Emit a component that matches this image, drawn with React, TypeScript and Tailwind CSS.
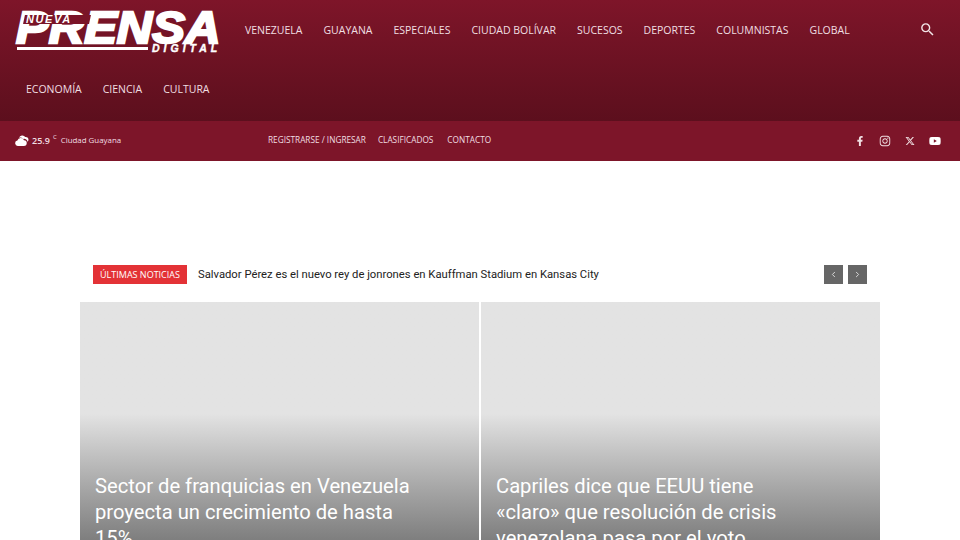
import { ChevronLeft, ChevronRight } from "lucide-react";
import { FaFacebookF, FaInstagram, FaYoutube } from "react-icons/fa";
import { FaXTwitter } from "react-icons/fa6";

const nav = ["VENEZUELA", "GUAYANA", "ESPECIALES", "CIUDAD BOLÍVAR", "SUCESOS", "DEPORTES", "COLUMNISTAS", "GLOBAL"];
const nav2 = ["ECONOMÍA", "CIENCIA", "CULTURA"];

function Logo() {
  return (
    <div className="relative w-[220px] h-[54px] text-white font-['Liberation_Sans',sans-serif] italic font-bold">
      <span className="absolute left-[16px] top-[-3px] text-[45px] leading-[50px] [-webkit-text-stroke:2.4px_white] origin-left scale-x-[1.09] whitespace-nowrap">PRENSA</span>
      <span className="absolute left-[24px] top-[9px] w-[66px] h-[9px] bg-[#7a1428] skew-x-[-12deg]" />
      <span className="absolute left-[26px] top-[8px] text-[11px] leading-[11px] tracking-[1.6px] text-white whitespace-nowrap">NUEVA</span>
      <div className="absolute left-[17px] top-[41px] w-[131px] h-[3px] bg-white" />
      <span className="absolute left-[152px] top-[36px] text-[10.5px] leading-[12px] tracking-[4px] [-webkit-text-stroke:0.4px_white] whitespace-nowrap">DIGITAL</span>
    </div>
  );
}

function Card({ lines }: { lines: string[] }) {
  return (
    <div className="h-[238px] overflow-hidden bg-gradient-to-b from-[#e3e3e3] from-[47%] to-[#5f5f5f] to-[118%] pl-[15px] pt-[171px]">
      {lines.map((l) => (
        <div key={l} className="text-[20.2px] leading-[26px] text-white whitespace-nowrap">
          {l}
        </div>
      ))}
    </div>
  );
}

export default function App() {
  return (
    <div className="w-[960px] h-[540px] overflow-hidden bg-white font-['Roboto',sans-serif]">
      {/* Header */}
      <div className="h-[121px] bg-gradient-to-b from-[#7e1529] to-[#5c0f1d] flex font-['Open_Sans',sans-serif]">
        <div className="w-[235px] shrink-0 pt-[6px]">
          <Logo />
        </div>
        <div className="flex-1 pl-[10px] text-[10.5px] text-[#f0dfe2]">
          <div className="flex items-center h-[61px] gap-[21px] whitespace-nowrap">
            {nav.map((n) => (
              <span key={n}>{n}</span>
            ))}
          </div>
        </div>
        <div className="w-[41px] pt-[21px] shrink-0">
          <svg width="17" height="17" viewBox="0 0 24 24" fill="#f3e6e8">
            <path d="M15.5 14h-.79l-.28-.27A6.47 6.47 0 0 0 16 9.5 6.5 6.5 0 1 0 9.5 16c1.61 0 3.09-.59 4.23-1.57l.27.28v.79l5 4.99L20.49 19l-4.99-5zm-6 0C7.01 14 5 11.99 5 9.5S7.01 5 9.5 5 14 7.01 14 9.5 11.99 14 9.5 14z" />
          </svg>
        </div>
      </div>
      <div className="h-0">
        <div className="relative -top-[61px] h-[60px] flex items-center pl-[26px] gap-[21px] text-[10.5px] text-[#f0dfe2] font-['Open_Sans',sans-serif]">
          {nav2.map((n) => (
            <span key={n}>{n}</span>
          ))}
        </div>
      </div>

      {/* Top bar */}
      <div className="h-[40px] pb-[1px] bg-[#7d1529] flex items-center text-[#f0dfe2] font-['Open_Sans',sans-serif]">
        <div className="w-[268px] pl-[15px] flex items-center shrink-0 whitespace-nowrap">
          <svg width="14" height="11" viewBox="0 0 28 22" fill="white">
            <path d="M8 5.5A7 7 0 0 1 20.5 4 5.5 5.5 0 0 1 27 9.5a4.5 4.5 0 0 1-2 3.8A6.5 6.5 0 0 0 16 8a8 8 0 0 0-8-2.5z" />
            <path d="M6 22a5.5 5.5 0 0 1-1.2-10.9A7 7 0 0 1 18 10.5a5.7 5.7 0 0 1 5.5 5.7A5.8 5.8 0 0 1 17.7 22H6z" />
          </svg>
          <span className="ml-[3px] text-[9px] font-semibold">25.9</span>
          <span className="ml-[3px] mb-[7px] text-[6px]">C</span>
          <span className="ml-[4px] text-[7.9px]">Ciudad Guayana</span>
        </div>
        <div className="flex text-[8.25px] whitespace-nowrap">
          <span>REGISTRARSE / INGRESAR</span>
          <span className="ml-[12px]">CLASIFICADOS</span>
          <span className="ml-[14px]">CONTACTO</span>
        </div>
        <div className="ml-auto pr-[20px] flex items-center gap-[14px] translate-x-[1px]">
          <FaFacebookF size={10} />
          <FaInstagram size={12} />
          <FaXTwitter size={10} />
          <FaYoutube size={12} className="text-white" />
        </div>
      </div>

      {/* Ticker */}
      <div className="mt-[104px] h-[19px] mx-[93px] flex items-center">
        <div className="w-[94px] h-[19px] bg-[#e33236] text-white text-[9px] flex items-center justify-center font-['Open_Sans',sans-serif] whitespace-nowrap">
          ÚLTIMAS NOTICIAS
        </div>
        <span className="ml-[11px] mt-[1px] text-[11.25px] text-[#222222] whitespace-nowrap">
          Salvador Pérez es el nuevo rey de jonrones en Kauffman Stadium en Kansas City
        </span>
        <div className="ml-auto flex gap-[5px]">
          <div className="w-[19px] h-[19px] bg-[#666666] flex items-center justify-center text-[#dddddd]">
            <ChevronLeft size={9} strokeWidth={2.5} />
          </div>
          <div className="w-[19px] h-[19px] bg-[#666666] flex items-center justify-center text-[#dddddd]">
            <ChevronRight size={9} strokeWidth={2.5} />
          </div>
        </div>
      </div>

      {/* Cards */}
      <div className="mt-[18px] mx-[80px] grid grid-cols-2 gap-[2px]">
        <Card lines={["Sector de franquicias en Venezuela", "proyecta un crecimiento de hasta", "15%"]} />
        <Card lines={["Capriles dice que EEUU tiene", "«claro» que resolución de crisis", "venezolana pasa por el voto"]} />
      </div>
    </div>
  );
}
